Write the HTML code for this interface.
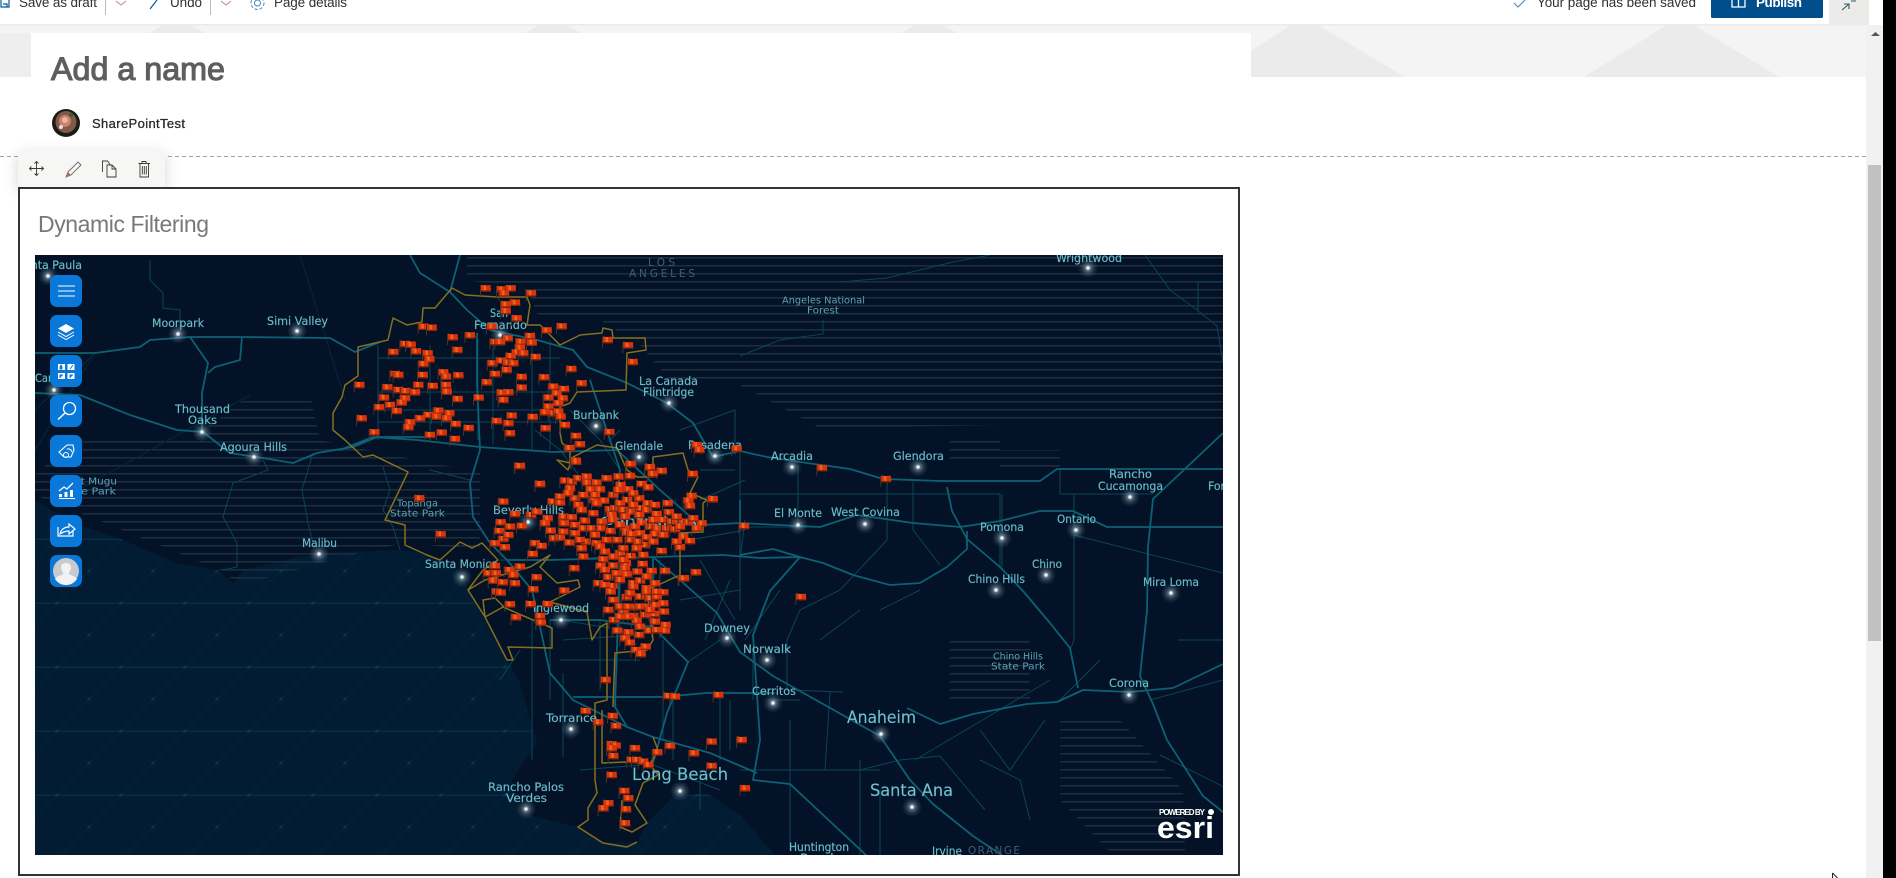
<!DOCTYPE html>
<html><head><meta charset="utf-8"><title>Add a name</title>
<style>
html,body{margin:0;padding:0;width:1896px;height:878px;overflow:hidden;background:#fff}
svg{display:block}
text{font-family:"Liberation Sans",sans-serif}
.l text{font-family:"DejaVu Sans","Liberation Sans",sans-serif;fill:#76c3d0;stroke:#4f98a8;stroke-width:.25;font-size:11.5px;dominant-baseline:central}
.b text{font-size:17px}
.s text{font-size:9.5px;fill:#5fa2b0;stroke:none}
.d text{fill:#3f6071;font-size:10.5px;stroke:none}
.r1{fill:none;stroke:#0d6175;stroke-width:1.8;stroke-linejoin:round}
.r2{fill:none;stroke:#0a4557;stroke-width:1}
.r3{fill:none;stroke:#06283a;stroke-width:1}
</style></head><body>
<svg width="1896" height="878" viewBox="0 0 1896 878" xmlns="http://www.w3.org/2000/svg">
<defs>
<pattern id="st" width="8" height="8" patternUnits="userSpaceOnUse" y="1"><rect width="8" height="1.6" fill="#1d2d3e"/></pattern>
<pattern id="oc" width="64" height="64" patternUnits="userSpaceOnUse" x="57" y="603">
<rect width="64" height="1.4" y="-.3" fill="#052c42"/><rect width="64" height="1" y="63.600" fill="#052c42"/>
<path d="M0 64L64 0" stroke="#052a40" stroke-width=".6" fill="none"/>
<rect x="-1.500" y="-1.500" width="3" height="3" fill="#0b3a4a"/><rect x="62.500" y="-1.500" width="3" height="3" fill="#0b3a4a"/><rect x="-1.500" y="62.500" width="3" height="3" fill="#0b3a4a"/><rect x="62.500" y="62.500" width="3" height="3" fill="#0b3a4a"/>
<rect x="30.500" y="30.500" width="3" height="3" fill="#0a3545"/></pattern>
<radialGradient id="gl"><stop offset="0" stop-color="#fff"/><stop offset=".13" stop-color="#e8f4f6" stop-opacity=".95"/><stop offset=".26" stop-color="#a4bbc6" stop-opacity=".55"/><stop offset=".6" stop-color="#7d96a5" stop-opacity=".25"/><stop offset="1" stop-color="#6f8fa0" stop-opacity="0"/></radialGradient>
<circle id="c" r="10" fill="url(#gl)"/>
<g id="f"><rect x="-17" y="-10" width="3" height="33" fill="#4a3226"/><path d="M-14-11L-3-9 15-10 16 9 0 10-14 8z" fill="#d9330e"/><path d="M-7-9L1-9 2 9-6 9z" fill="#f4601a"/><path d="M-14 6L16 6 16 10-14 10z" fill="#8e240a"/></g>
<clipPath id="mc"><rect x="35" y="255" width="1188" height="600"/></clipPath>
<filter id="sh" x="-20%" y="-50%" width="140%" height="220%"><feDropShadow dx="0" dy="4" stdDeviation="7" flood-color="#000" flood-opacity=".17"/></filter>
</defs>

<rect width="1896" height="878" fill="#fff"/>
<!-- hero -->
<rect x="0" y="25" width="1866" height="52" fill="#f4f4f4"/>
<rect x="0" y="24" width="1866" height="1.500" fill="#ebebeb"/>
<rect x="0" y="33" width="31" height="44" fill="#eeeeee"/>
<path d="M163 25h27l96 52h-210zM539 25h27l96 52h-210zM915 25h27l96 52h-210zM1291 25h27l87 52h-154v-26zM1667 25h27l85 52h-195z" fill="#ebebeb"/>
<rect x="31" y="33" width="1220" height="44" fill="#fff"/>
<!-- top bar -->
<rect width="1896" height="24" fill="#fff"/>
<path d="M1 0V7H9V0M3 4h4v3" fill="none" stroke="#005a9e" stroke-width="1.200"/>
<text x="19" y="7" font-size="13.500" fill="#323130" textLength="78">Save as draft</text>
<rect x="105" y="0" width="1" height="15" fill="#bbb"/>
<path d="M116 1l5 4 5-4" fill="none" stroke="#c0888a" stroke-width="1"/>
<path d="M150 9l7-9" fill="none" stroke="#005a9e" stroke-width="1.200"/>
<text x="170" y="7" font-size="13.500" fill="#323130" textLength="32">Undo</text>
<rect x="210" y="0" width="1" height="15" fill="#bbb"/>
<path d="M221 1l5 4 5-4" fill="none" stroke="#c0888a" stroke-width="1"/>
<circle cx="257.500" cy="3" r="3" fill="none" stroke="#4a86b8"/><circle cx="257.500" cy="3" r="6.500" fill="none" stroke="#4a86b8" stroke-dasharray="3 2"/>
<text x="274" y="7" font-size="13.500" fill="#323130" textLength="73">Page details</text>
<path d="M1514 3l4 4 8-8" fill="none" stroke="#4a86b8" stroke-width="1"/>
<text x="1537" y="7" font-size="13.500" fill="#323130" textLength="159">Your page has been saved</text>
<rect x="1711" y="-3" width="112" height="21" rx="1.500" fill="#004e8c"/>
<path d="M1732 0v7h6.500h6.500v-7M1738.500 0v7" fill="none" stroke="#fff" stroke-width="1.300"/>
<text x="1756" y="7" font-size="13.500" font-weight="700" fill="#fff" textLength="46">Publish</text>
<rect x="1829" y="0" width="40" height="25" fill="#edebe9"/>
<path d="M1842 10l7-6M1844 4h5v5M1851 1h5" fill="none" stroke="#2c5a68" stroke-width="1.100"/>
<!-- scrollbar -->
<rect x="1866" y="25" width="17" height="853" fill="#f1f1f1"/>
<path d="M1871 36l4.500-4 4.500 4z" fill="#4c5a62"/>
<rect x="1868" y="165" width="13" height="476" fill="#c1c1c1"/>
<rect x="1883" y="0" width="13" height="878" fill="#000"/>
<path d="M1832.500 873l0 5M1832.500 873l5 5" fill="none" stroke="#222" stroke-width="1"/>
<!-- title -->
<text x="51" y="80" font-size="32" fill="#605e5c" stroke="#605e5c" stroke-width="1.100" textLength="174" lengthAdjust="spacingAndGlyphs">Add a name</text>
<ellipse cx="66" cy="123" rx="14" ry="14" fill="#1b1c12"/><ellipse cx="66" cy="122" rx="10.500" ry="11" fill="#7f5a46"/><circle cx="65" cy="121" r="6" fill="#c9806c"/><circle cx="65" cy="120" r="3" fill="#eab39f"/><circle cx="61" cy="127" r="2" fill="#e7e0d8"/><circle cx="71" cy="115" r="2" fill="#3d5a3a"/>
<text x="92" y="128" font-size="13" fill="#2b2a29" stroke="#2b2a29" stroke-width=".3" textLength="93">SharePointTest</text>
<line x1="0" y1="156.500" x2="1866" y2="156.500" stroke="#a3a3a3" stroke-dasharray="4 3"/>
<rect x="18" y="150" width="147" height="38" rx="6" fill="#f6f6f5" filter="url(#sh)"/>
<!-- toolbar icons -->
<g fill="none" stroke="#3b3a39" stroke-width=".9">
<path d="M36.500 162v13M29.500 168.500h14M34.500 163.500l2-2 2 2M34.500 173.500l2 2 2-2M31.500 166.500l-2 2 2 2M41.500 166.500l2 2-2 2"/>
<path d="M66 177l2-5 10-10 3 3-10 10z" stroke="#6b6a69"/><path d="M66 177l2-5 3 3z" fill="#a5705e" stroke="none"/>
<path d="M116 177h-9v-12h5l4 4zM102.500 172v-11h5l3 4M112 165v4h4"/>
<path d="M138.500 163.500h11.500M142 163.500v-2h4v2M140 163.500v13.500h8.500v-13.500M142.300 166v8.500M144.300 166v8.500M146.300 166v8.500"/>
</g>
<!-- frame -->
<rect x="19" y="188" width="1220" height="687" fill="#fff" stroke="#333" stroke-width="2"/>
<text x="38" y="232" font-size="23" fill="#7a7876" textLength="171">Dynamic Filtering</text>

<!-- MAP -->
<g clip-path="url(#mc)">
<rect x="35" y="255" width="1188" height="600" fill="#031226"/>
<path d="M35 500L63 517 85 527 123 540 177 563 217 570 233 583 243 570 317 553 397 550 423 552 440 560 462 575 468 590 483 617 507 660 520 683 537 743 523 763 512 780 520 813 578 827 603 843 637 842 647 823 673 797 707 793 740 815 775 855H35z" fill="#021c33"/>
<path d="M35 500L63 517 85 527 123 540 177 563 217 570 233 583 243 570 317 553 397 550 423 552 440 560 462 575 468 590 483 617 507 660 520 683 537 743 523 763 512 780 520 813 578 827 603 843 637 842 647 823 673 797 707 793 740 815 775 855H35z" fill="url(#oc)"/>
<path d="M467 255H1223V425H1000L820 428 740 385 672 383 640 345 600 320 540 320 527 290 467 280zM73 440H190L250 395H310L320 440 440 465 480 470 480 550 407 543 370 550 240 585 220 570 110 525 35 495V475zM1060 720H1120L1183 790 1185 852H1110L1060 800zM950 640H1030V700H950zM1000 450H1060V470H1000zM950 440H1000V460H950z" fill="url(#st)"/>
<!-- thin roads -->
<path class="r3" d="M35 353H95L35 410M95 353L35 450M60 500L250 395M300 255L345 400"/>
<path class="r2" d="M150 260V280L163 293V308L180 310V333M263 460L268 470 233 483 228 500 223 517 237 543 237 567 223 570M313 453L302 490 308 523 313 543M383 467L390 490 383 510 393 527 400 550M378 345V440M430 345V440M478 340V440M493 340V445M532 345V450M550 340V450M378 358H560M378 392H560M378 410H560M378 422H560M740 451V523M798 465V527M887 482V540L840 590 800 610 787 640 787 690 843 692M913 482V530L940 565M1002 494V567M1060 469V494H1153M1074 494V640L1070 650M740 494H887L1000 494M1074 535L1223 573M740 527L820 527M740 520V610M1000 494V555L1000 567M740 356L780 340 823 334 823 320M840 282L887 278 953 262 990 255M1145 255L1170 290 1197 310 1217 326 1223 362M1223 282L1198 282 1198 310M830 692L825 770M860 760V856M768 700L800 700M790 720L790 850M880 790L880 856M915 760L1050 680M1100 660L1060 700M1178 640L1223 640M1150 700L1223 680M980 730L1010 770 1045 720M980 760L1020 780 1030 820M1230 790L1160 755M740 770L880 770M860 770L900 760 940 756 985 810M532 620V760M550 620V700M563 673V757M600 620V690M663 640V740M688 662L720 640M673 700V760M720 693V760M753 650V700M700 770L700 810M620 560V640M660 560V620M500 680L520 650M430 470L470 480M500 560L560 560 620 556M560 620L610 628M705 640L730 580M740 560L745 520M745 640L780 590M730 700V750M820 640L860 610M880 610L920 590M700 470L735 470M680 430L735 410 735 455M610 440L620 430M535 430L560 450 575 470 590 490M570 410L600 440 620 470M700 500L745 480M690 540L745 530M680 600L740 590M560 660H640M563 640L640 635M640 760L720 790M580 770L640 765M700 560L735 620"/>
<!-- main roads -->
<path class="r1" d="M35 353H95L140 347 150 340 190 337H240L330 338 355 352 380 342M35 393L80 395 130 415 177 430 203 432 230 453 263 458 293 463 317 453 353 447 377 437H430M190 337L208 363 202 393V430M242 337L240 360 215 367 208 373M410 255L420 273 450 292 467 310 490 330 537 340 573 350 587 367 627 383 667 403 693 423 707 447 713 457M460 255L450 292M477 333V383L480 450 470 483 473 517 490 543 507 560 532 590 550 673 573 700 627 727 653 737 710 753 757 773M340 450L373 437 417 440 480 447 553 452 617 450M507 560H550L653 557 723 555 760 558 800 557M713 457L740 451 767 457 807 463 850 469 883 479 940 481 1040 481 1057 469H1223M617 450L660 490 700 525 740 523 820 527 857 515 913 523 960 527 1000 521 1040 511H1073L1107 527H1223M740 555L773 549 800 557 823 563 853 575 890 585 920 583 947 567 967 549V531M947 487L952 511 967 539 1000 567 1023 591 1050 623 1070 648 1078 688M653 557L680 580 717 613 740 652 773 676 823 704 880 736 910 780 933 804 973 836 1003 856M907 708L940 724 973 714 1027 704 1057 702 1083 690 1130 692 1173 688 1223 664M1223 433L1187 467 1153 499 1148 547 1147 611 1140 676 1153 704 1167 740 1203 796 1223 812M800 557L770 591 753 635 760 740 753 780 790 784 867 856M620 557L617 647 615 707 627 727M653 557V627L688 662 667 713 653 763M550 620H600L653 627 688 662M573 697H660L707 693H745L775 693M590 380L610 440 620 470 617 500M740 500V530"/>
<!-- boundary -->
<path fill="none" stroke="#86701f" stroke-width="1.500" stroke-linejoin="round" d="M497 297L465 295 452 288 435 308H423L422 322 407 325 393 318 388 340 358 347V376L345 385 342 397 333 413V430L345 440 363 457 373 455 408 472 385 520 405 525V545L427 555 440 560 460 542 472 548 482 543 498 560 483 570 468 590 485 580 530 567 550 555 540 567 557 583 578 580 580 587 550 602 587 612 592 640 600 627 607 623V700L595 703V780L597 793 588 808V820L578 827 603 843 627 847 637 842M602 710V763L625 762 650 764 658 750 653 737M652 767L658 775 643 783 635 805 647 823 632 832 620 827 622 800M613 707L615 653 647 650 653 640 647 590 680 575V533L703 532V503M468 590L485 617 507 660 513 660 508 647 552 648V628L533 620 503 607 485 617 483 600 495 598 505 608M497 297L527 297 530 305 527 325 540 325 560 345 580 335 602 333 603 328 612 330 613 338 645 338 646 350 627 353 626 390 577 392 570 403 560 407 560 433 562 443 570 450V463L557 460 568 470 573 457 597 445 617 448 627 470 637 477 653 477V457L683 453 688 470 698 477 690 493 707 500 703 503"/>
<!-- lights -->
<use href="#c" x="48" y="276"/><use href="#c" x="54" y="390"/><use href="#c" x="178" y="334"/><use href="#c" x="297" y="331"/><use href="#c" x="202" y="432"/><use href="#c" x="254" y="457"/><use href="#c" x="319" y="554"/><use href="#c" x="500" y="335"/><use href="#c" x="669" y="403"/><use href="#c" x="596" y="426"/><use href="#c" x="639" y="457"/><use href="#c" x="715" y="456"/><use href="#c" x="528" y="522"/><use href="#c" x="462" y="577"/><use href="#c" x="561" y="620"/><use href="#c" x="571" y="729"/><use href="#c" x="727" y="638"/><use href="#c" x="680" y="791"/><use href="#c" x="526" y="809"/><use href="#c" x="1088" y="268"/><use href="#c" x="792" y="467"/><use href="#c" x="918" y="467"/><use href="#c" x="1130" y="497"/><use href="#c" x="798" y="525"/><use href="#c" x="865" y="524"/><use href="#c" x="1002" y="538"/><use href="#c" x="1076" y="530"/><use href="#c" x="1046" y="575"/><use href="#c" x="996" y="590"/><use href="#c" x="1171" y="593"/><use href="#c" x="767" y="660"/><use href="#c" x="773" y="703"/><use href="#c" x="1129" y="695"/><use href="#c" x="881" y="734"/><use href="#c" x="912" y="807"/>
<!-- labels -->
<g class="l">
<text x="17" y="265" textLength="65" lengthAdjust="spacingAndGlyphs">Santa Paula</text><text x="35" y="378" textLength="47" lengthAdjust="spacingAndGlyphs">Camarillo</text>
<text x="152" y="323" textLength="52" lengthAdjust="spacingAndGlyphs">Moorpark</text><text x="267" y="321" textLength="61" lengthAdjust="spacingAndGlyphs">Simi Valley</text>
<text x="175" y="409" textLength="55" lengthAdjust="spacingAndGlyphs">Thousand</text><text x="188" y="420" textLength="29" lengthAdjust="spacingAndGlyphs">Oaks</text>
<text x="220" y="447" textLength="67" lengthAdjust="spacingAndGlyphs">Agoura Hills</text><text x="302" y="543" textLength="35" lengthAdjust="spacingAndGlyphs">Malibu</text>
<text x="490" y="313" textLength="18" lengthAdjust="spacingAndGlyphs">San</text><text x="474" y="325" textLength="53" lengthAdjust="spacingAndGlyphs">Fernando</text>
<text x="639" y="381" textLength="59" lengthAdjust="spacingAndGlyphs">La Canada</text><text x="643" y="392" textLength="51" lengthAdjust="spacingAndGlyphs">Flintridge</text>
<text x="573" y="415" textLength="46" lengthAdjust="spacingAndGlyphs">Burbank</text><text x="615" y="446" textLength="48" lengthAdjust="spacingAndGlyphs">Glendale</text><text x="688" y="445" textLength="54" lengthAdjust="spacingAndGlyphs">Pasadena</text>
<text x="493" y="510" textLength="71" lengthAdjust="spacingAndGlyphs">Beverly Hills</text><text x="600" y="521" textLength="97" lengthAdjust="spacingAndGlyphs">Central LA</text><text x="425" y="564" textLength="73" lengthAdjust="spacingAndGlyphs">Santa Monica</text>
<text x="533" y="608" textLength="56" lengthAdjust="spacingAndGlyphs">Inglewood</text><text x="546" y="718" textLength="51" lengthAdjust="spacingAndGlyphs">Torrance</text><text x="704" y="628" textLength="46" lengthAdjust="spacingAndGlyphs">Downey</text><text x="743" y="649" textLength="48" lengthAdjust="spacingAndGlyphs">Norwalk</text>
<text x="488" y="787" textLength="76" lengthAdjust="spacingAndGlyphs">Rancho Palos</text><text x="506" y="798" textLength="41" lengthAdjust="spacingAndGlyphs">Verdes</text>
<text x="1056" y="258" textLength="66" lengthAdjust="spacingAndGlyphs">Wrightwood</text>
<text x="771" y="456" textLength="42" lengthAdjust="spacingAndGlyphs">Arcadia</text><text x="893" y="456" textLength="51" lengthAdjust="spacingAndGlyphs">Glendora</text><text x="1109" y="474" textLength="43" lengthAdjust="spacingAndGlyphs">Rancho</text><text x="1098" y="486" textLength="65" lengthAdjust="spacingAndGlyphs">Cucamonga</text><text x="1208" y="486" textLength="44" lengthAdjust="spacingAndGlyphs">Fontana</text>
<text x="774" y="513" textLength="48" lengthAdjust="spacingAndGlyphs">El Monte</text><text x="831" y="512" textLength="69" lengthAdjust="spacingAndGlyphs">West Covina</text><text x="980" y="527" textLength="44" lengthAdjust="spacingAndGlyphs">Pomona</text><text x="1057" y="519" textLength="39" lengthAdjust="spacingAndGlyphs">Ontario</text><text x="1032" y="564" textLength="30" lengthAdjust="spacingAndGlyphs">Chino</text><text x="968" y="579" textLength="57" lengthAdjust="spacingAndGlyphs">Chino Hills</text><text x="1143" y="582" textLength="56" lengthAdjust="spacingAndGlyphs">Mira Loma</text>
<text x="752" y="691" textLength="44" lengthAdjust="spacingAndGlyphs">Cerritos</text><text x="1109" y="683" textLength="40" lengthAdjust="spacingAndGlyphs">Corona</text>
<text x="789" y="847" textLength="60" lengthAdjust="spacingAndGlyphs">Huntington</text><text x="800" y="858" textLength="38" lengthAdjust="spacingAndGlyphs">Beach</text><text x="932" y="851" textLength="30" lengthAdjust="spacingAndGlyphs">Irvine</text>
</g>
<g class="l b"><text x="632" y="775" textLength="96" lengthAdjust="spacingAndGlyphs">Long Beach</text><text x="847" y="718" textLength="69" lengthAdjust="spacingAndGlyphs">Anaheim</text><text x="870" y="791" textLength="83" lengthAdjust="spacingAndGlyphs">Santa Ana</text></g>
<g class="l s"><text x="59" y="482" textLength="58" lengthAdjust="spacingAndGlyphs">Point Mugu</text><text x="58" y="492" textLength="58" lengthAdjust="spacingAndGlyphs">State Park</text><text x="397" y="504" textLength="41" lengthAdjust="spacingAndGlyphs">Topanga</text><text x="390" y="514" textLength="55" lengthAdjust="spacingAndGlyphs">State Park</text><text x="782" y="301" textLength="83" lengthAdjust="spacingAndGlyphs">Angeles National</text><text x="807" y="311" textLength="32" lengthAdjust="spacingAndGlyphs">Forest</text><text x="993" y="657" textLength="50" lengthAdjust="spacingAndGlyphs">Chino Hills</text><text x="991" y="667" textLength="54" lengthAdjust="spacingAndGlyphs">State Park</text></g>
<g class="l d"><text x="648" y="263" textLength="27">LOS</text><text x="629" y="274" textLength="66">ANGELES</text><text x="968" y="851" textLength="52">ORANGE</text></g>
<!-- flags: valley -->
<g transform="translate(340 250) scale(.3333)">
<use href="#f" x="437" y="115"/><use href="#f" x="485" y="118"/><use href="#f" x="512" y="115"/><use href="#f" x="492" y="130"/><use href="#f" x="573" y="130"/><use href="#f" x="525" y="158"/><use href="#f" x="497" y="163"/><use href="#f" x="497" y="183"/><use href="#f" x="530" y="205"/><use href="#f" x="250" y="230"/><use href="#f" x="275" y="233"/><use href="#f" x="455" y="230"/><use href="#f" x="620" y="241"/><use href="#f" x="665" y="229"/><use href="#f" x="338" y="262"/><use href="#f" x="390" y="256"/><use href="#f" x="803" y="270"/><use href="#f" x="864" y="286"/><use href="#f" x="878" y="336"/><use href="#f" x="570" y="258"/><use href="#f" x="503" y="265"/><use href="#f" x="465" y="276"/><use href="#f" x="480" y="276"/><use href="#f" x="542" y="275"/><use href="#f" x="575" y="278"/><use href="#f" x="540" y="293"/><use href="#f" x="530" y="308"/><use href="#f" x="550" y="310"/><use href="#f" x="512" y="318"/><use href="#f" x="587" y="321"/><use href="#f" x="195" y="282"/><use href="#f" x="212" y="284"/><use href="#f" x="228" y="304"/><use href="#f" x="160" y="306"/><use href="#f" x="352" y="300"/><use href="#f" x="263" y="310"/><use href="#f" x="268" y="328"/><use href="#f" x="250" y="342"/><use href="#f" x="457" y="340"/><use href="#f" x="483" y="332"/><use href="#f" x="503" y="338"/><use href="#f" x="520" y="340"/><use href="#f" x="500" y="360"/><use href="#f" x="694" y="357"/><use href="#f" x="165" y="372"/><use href="#f" x="175" y="375"/><use href="#f" x="248" y="375"/><use href="#f" x="355" y="376"/><use href="#f" x="310" y="367"/><use href="#f" x="318" y="380"/><use href="#f" x="318" y="405"/><use href="#f" x="320" y="425"/><use href="#f" x="235" y="405"/><use href="#f" x="278" y="408"/><use href="#f" x="142" y="412"/><use href="#f" x="175" y="420"/><use href="#f" x="197" y="423"/><use href="#f" x="225" y="427"/><use href="#f" x="195" y="445"/><use href="#f" x="185" y="458"/><use href="#f" x="132" y="443"/><use href="#f" x="150" y="465"/><use href="#f" x="117" y="472"/><use href="#f" x="170" y="483"/><use href="#f" x="58" y="405"/><use href="#f" x="353" y="447"/><use href="#f" x="416" y="443"/><use href="#f" x="465" y="372"/><use href="#f" x="545" y="381"/><use href="#f" x="612" y="382"/><use href="#f" x="440" y="397"/><use href="#f" x="545" y="413"/><use href="#f" x="725" y="400"/><use href="#f" x="640" y="410"/><use href="#f" x="672" y="417"/><use href="#f" x="650" y="430"/><use href="#f" x="505" y="427"/><use href="#f" x="485" y="428"/><use href="#f" x="490" y="450"/><use href="#f" x="625" y="443"/><use href="#f" x="668" y="445"/><use href="#f" x="655" y="460"/><use href="#f" x="625" y="470"/><use href="#f" x="640" y="490"/><use href="#f" x="655" y="485"/><use href="#f" x="615" y="487"/><use href="#f" x="295" y="482"/><use href="#f" x="328" y="490"/><use href="#f" x="265" y="495"/><use href="#f" x="240" y="505"/><use href="#f" x="210" y="517"/><use href="#f" x="205" y="532"/><use href="#f" x="290" y="500"/><use href="#f" x="320" y="505"/><use href="#f" x="347" y="522"/><use href="#f" x="386" y="534"/><use href="#f" x="270" y="555"/><use href="#f" x="305" y="548"/><use href="#f" x="345" y="567"/><use href="#f" x="65" y="505"/><use href="#f" x="103" y="547"/><use href="#f" x="515" y="497"/><use href="#f" x="470" y="513"/><use href="#f" x="505" y="520"/><use href="#f" x="578" y="501"/><use href="#f" x="662" y="500"/><use href="#f" x="675" y="525"/><use href="#f" x="617" y="535"/><use href="#f" x="708" y="558"/><use href="#f" x="510" y="550"/><use href="#f" x="720" y="583"/><use href="#f" x="688" y="594"/><use href="#f" x="808" y="546"/><use href="#f" x="707" y="632"/><use href="#f" x="540" y="648"/><use href="#f" x="873" y="643"/><use href="#f" x="930" y="651"/><use href="#f" x="965" y="663"/><use href="#f" x="938" y="672"/><use href="#f" x="1058" y="672"/><use href="#f" x="1070" y="585"/><use href="#f" x="1078" y="600"/><use href="#f" x="1190" y="596"/><use href="#f" x="238" y="745"/><use href="#f" x="302" y="853"/><use href="#f" x="600" y="702"/>
</g>
<!-- flags: central -->
<g transform="translate(480 460) scale(.3333)">
<use href="#f" x="118" y="18"/><use href="#f" x="180" y="72"/><use href="#f" x="288" y="5"/><use href="#f" x="452" y="12"/><use href="#f" x="510" y="22"/><use href="#f" x="545" y="33"/><use href="#f" x="518" y="42"/><use href="#f" x="638" y="42"/><use href="#f" x="450" y="48"/><use href="#f" x="255" y="62"/><use href="#f" x="275" y="65"/><use href="#f" x="295" y="55"/><use href="#f" x="320" y="50"/><use href="#f" x="322" y="68"/><use href="#f" x="350" y="68"/><use href="#f" x="380" y="55"/><use href="#f" x="415" y="50"/><use href="#f" x="270" y="85"/><use href="#f" x="332" y="88"/><use href="#f" x="360" y="88"/><use href="#f" x="422" y="75"/><use href="#f" x="445" y="88"/><use href="#f" x="485" y="72"/><use href="#f" x="505" y="82"/><use href="#f" x="698" y="118"/><use href="#f" x="635" y="108"/><use href="#f" x="625" y="122"/><use href="#f" x="630" y="138"/><use href="#f" x="285" y="115"/><use href="#f" x="310" y="105"/><use href="#f" x="400" y="105"/><use href="#f" x="372" y="122"/><use href="#f" x="442" y="120"/><use href="#f" x="478" y="115"/><use href="#f" x="503" y="130"/><use href="#f" x="563" y="130"/><use href="#f" x="70" y="125"/><use href="#f" x="218" y="125"/><use href="#f" x="240" y="128"/><use href="#f" x="295" y="135"/><use href="#f" x="305" y="150"/><use href="#f" x="390" y="148"/><use href="#f" x="405" y="145"/><use href="#f" x="430" y="150"/><use href="#f" x="452" y="155"/><use href="#f" x="482" y="145"/><use href="#f" x="500" y="150"/><use href="#f" x="567" y="157"/><use href="#f" x="105" y="162"/><use href="#f" x="153" y="165"/><use href="#f" x="203" y="175"/><use href="#f" x="250" y="170"/><use href="#f" x="275" y="172"/><use href="#f" x="315" y="182"/><use href="#f" x="395" y="165"/><use href="#f" x="398" y="180"/><use href="#f" x="435" y="170"/><use href="#f" x="478" y="165"/><use href="#f" x="530" y="162"/><use href="#f" x="548" y="180"/><use href="#f" x="485" y="188"/><use href="#f" x="510" y="200"/><use href="#f" x="62" y="187"/><use href="#f" x="90" y="200"/><use href="#f" x="125" y="198"/><use href="#f" x="195" y="190"/><use href="#f" x="212" y="212"/><use href="#f" x="252" y="190"/><use href="#f" x="285" y="195"/><use href="#f" x="310" y="205"/><use href="#f" x="335" y="205"/><use href="#f" x="362" y="205"/><use href="#f" x="392" y="213"/><use href="#f" x="435" y="205"/><use href="#f" x="465" y="200"/><use href="#f" x="532" y="205"/><use href="#f" x="560" y="205"/><use href="#f" x="585" y="208"/><use href="#f" x="610" y="185"/><use href="#f" x="625" y="188"/><use href="#f" x="665" y="190"/><use href="#f" x="640" y="175"/><use href="#f" x="58" y="213"/><use href="#f" x="285" y="220"/><use href="#f" x="440" y="218"/><use href="#f" x="480" y="220"/><use href="#f" x="525" y="222"/><use href="#f" x="550" y="225"/><use href="#f" x="610" y="230"/><use href="#f" x="630" y="243"/><use href="#f" x="70" y="237"/><use href="#f" x="222" y="235"/><use href="#f" x="240" y="233"/><use href="#f" x="268" y="248"/><use href="#f" x="318" y="245"/><use href="#f" x="350" y="250"/><use href="#f" x="380" y="240"/><use href="#f" x="412" y="240"/><use href="#f" x="450" y="240"/><use href="#f" x="495" y="255"/><use href="#f" x="475" y="245"/><use href="#f" x="165" y="250"/><use href="#f" x="185" y="258"/><use href="#f" x="75" y="262"/><use href="#f" x="305" y="265"/><use href="#f" x="360" y="260"/><use href="#f" x="375" y="275"/><use href="#f" x="452" y="288"/><use href="#f" x="490" y="285"/><use href="#f" x="600" y="262"/><use href="#f" x="545" y="273"/><use href="#f" x="158" y="282"/><use href="#f" x="310" y="290"/><use href="#f" x="370" y="298"/><use href="#f" x="438" y="310"/><use href="#f" x="488" y="312"/><use href="#f" x="283" y="325"/><use href="#f" x="120" y="320"/><use href="#f" x="45" y="318"/><use href="#f" x="88" y="330"/><use href="#f" x="362" y="318"/><use href="#f" x="400" y="317"/><use href="#f" x="435" y="325"/><use href="#f" x="472" y="335"/><use href="#f" x="515" y="333"/><use href="#f" x="555" y="333"/><use href="#f" x="648" y="337"/><use href="#f" x="25" y="340"/><use href="#f" x="48" y="340"/><use href="#f" x="170" y="352"/><use href="#f" x="440" y="343"/><use href="#f" x="385" y="352"/><use href="#f" x="612" y="355"/><use href="#f" x="40" y="362"/><use href="#f" x="68" y="367"/><use href="#f" x="105" y="370"/><use href="#f" x="355" y="370"/><use href="#f" x="460" y="370"/><use href="#f" x="480" y="362"/><use href="#f" x="525" y="370"/><use href="#f" x="398" y="378"/><use href="#f" x="160" y="388"/><use href="#f" x="253" y="392"/><use href="#f" x="50" y="395"/><use href="#f" x="62" y="398"/><use href="#f" x="392" y="395"/><use href="#f" x="460" y="380"/><use href="#f" x="550" y="397"/><use href="#f" x="400" y="420"/><use href="#f" x="440" y="412"/><use href="#f" x="480" y="410"/><use href="#f" x="510" y="415"/><use href="#f" x="90" y="433"/><use href="#f" x="152" y="432"/><use href="#f" x="203" y="432"/><use href="#f" x="550" y="430"/><use href="#f" x="462" y="442"/><use href="#f" x="497" y="440"/><use href="#f" x="525" y="435"/><use href="#f" x="385" y="450"/><use href="#f" x="430" y="453"/><use href="#f" x="552" y="455"/><use href="#f" x="108" y="472"/><use href="#f" x="180" y="468"/><use href="#f" x="402" y="480"/><use href="#f" x="460" y="468"/><use href="#f" x="522" y="462"/><use href="#f" x="495" y="465"/><use href="#f" x="470" y="482"/><use href="#f" x="525" y="485"/><use href="#f" x="557" y="495"/><use href="#f" x="183" y="488"/><use href="#f" x="412" y="512"/><use href="#f" x="445" y="517"/><use href="#f" x="478" y="525"/><use href="#f" x="507" y="512"/><use href="#f" x="555" y="512"/><use href="#f" x="435" y="535"/><use href="#f" x="450" y="548"/><use href="#f" x="497" y="560"/><use href="#f" x="468" y="570"/><use href="#f" x="482" y="582"/>
<use href="#f" x="340" y="120"/><use href="#f" x="420" y="130"/><use href="#f" x="460" y="135"/><use href="#f" x="520" y="180"/><use href="#f" x="420" y="195"/><use href="#f" x="455" y="222"/><use href="#f" x="500" y="232"/><use href="#f" x="575" y="185"/><use href="#f" x="340" y="160"/><use href="#f" x="365" y="185"/><use href="#f" x="420" y="280"/><use href="#f" x="430" y="300"/><use href="#f" x="410" y="340"/><use href="#f" x="500" y="385"/><use href="#f" x="530" y="410"/><use href="#f" x="450" y="400"/><use href="#f" x="420" y="440"/><use href="#f" x="445" y="470"/><use href="#f" x="480" y="440"/><use href="#f" x="510" y="450"/>
<use href="#f" x="265" y="100"/><use href="#f" x="345" y="105"/><use href="#f" x="350" y="130"/><use href="#f" x="415" y="90"/><use href="#f" x="460" y="100"/><use href="#f" x="525" y="135"/><use href="#f" x="590" y="170"/><use href="#f" x="600" y="200"/><use href="#f" x="650" y="205"/><use href="#f" x="590" y="245"/><use href="#f" x="520" y="245"/><use href="#f" x="430" y="265"/><use href="#f" x="345" y="225"/><use href="#f" x="300" y="240"/><use href="#f" x="250" y="215"/><use href="#f" x="470" y="265"/><use href="#f" x="400" y="290"/><use href="#f" x="420" y="360"/><use href="#f" x="375" y="330"/><use href="#f" x="500" y="350"/><use href="#f" x="420" y="470"/><use href="#f" x="480" y="500"/><use href="#f" x="530" y="510"/><use href="#f" x="445" y="440"/><use href="#f" x="500" y="395"/><use href="#f" x="375" y="375"/><use href="#f" x="530" y="395"/><use href="#f" x="240" y="110"/><use href="#f" x="170" y="155"/><use href="#f" x="85" y="225"/><use href="#f" x="45" y="250"/><use href="#f" x="100" y="345"/>
</g>
<!-- flags: south -->
<g transform="translate(440 480) scale(.3333)">
<use href="#f" x="497" y="600"/><use href="#f" x="685" y="648"/><use href="#f" x="705" y="650"/><use href="#f" x="835" y="645"/><use href="#f" x="437" y="693"/><use href="#f" x="475" y="727"/><use href="#f" x="518" y="708"/><use href="#f" x="528" y="738"/><use href="#f" x="515" y="793"/><use href="#f" x="527" y="797"/><use href="#f" x="515" y="805"/><use href="#f" x="520" y="828"/><use href="#f" x="585" y="805"/><use href="#f" x="690" y="798"/><use href="#f" x="652" y="817"/><use href="#f" x="575" y="840"/><use href="#f" x="590" y="840"/><use href="#f" x="610" y="845"/><use href="#f" x="625" y="855"/><use href="#f" x="762" y="820"/><use href="#f" x="815" y="785"/><use href="#f" x="905" y="780"/><use href="#f" x="815" y="858"/><use href="#f" x="515" y="885"/><use href="#f" x="915" y="925"/><use href="#f" x="553" y="933"/><use href="#f" x="565" y="955"/><use href="#f" x="505" y="970"/><use href="#f" x="490" y="985"/><use href="#f" x="558" y="988"/><use href="#f" x="555" y="1030"/><use href="#f" x="912" y="138"/><use href="#f" x="818" y="57"/><use href="#f" x="730" y="295"/>
</g>
<g transform="scale(.3333)"><use href="#f" x="2466" y="1404"/><use href="#f" x="2658" y="1437"/><use href="#f" x="2403" y="1791"/></g>
<!-- esri -->
<text x="1159" y="815" font-size="8" font-weight="700" fill="#fff" textLength="46">POWERED BY</text><circle cx="1211" cy="812" r="3" fill="#fff"/>
<text x="1157" y="838" font-size="31" font-weight="700" fill="#fff" textLength="57" lengthAdjust="spacingAndGlyphs">esri</text>
</g>
<!-- map buttons -->
<g fill="#0a78d8">
<rect x="50" y="275" width="32" height="32" rx="7"/><rect x="50" y="315" width="32" height="32" rx="7"/><rect x="50" y="355" width="32" height="32" rx="7"/><rect x="50" y="395" width="32" height="32" rx="7"/><rect x="50" y="435" width="32" height="32" rx="7"/><rect x="50" y="475" width="32" height="32" rx="7"/><rect x="50" y="515" width="32" height="32" rx="7"/><rect x="50" y="555" width="32" height="32" rx="7"/>
</g>
<path d="M58 286h17M58 291h17M58 296h17" stroke="#fff" fill="none"/>
<path d="M66 324l8 4.500-8 4.500-8-4.500z" fill="#fff"/><path d="M58 332l8 4.500 8-4.500M58 335l8 4.500 8-4.500" stroke="#fff" fill="none"/>
<path d="M58 364h7v6h-7zM67.500 364h7v6h-7zM58 373h7v6h-7zM67.500 373h7v6h-7z" fill="#fff"/><path d="M60 369v-2l1-2 1 2v2zM70 369l3-4M60 378v-3h3M70 378v-3h3" stroke="#0a78d8" fill="#0a78d8" stroke-width="1"/>
<circle cx="69.500" cy="408.500" r="6" fill="none" stroke="#fff" stroke-width="1.300"/><path d="M65 413l-7 6.500" stroke="#fff" stroke-width="1.500"/>
<path d="M59 452l8-7h6l1 5-3 7h-7z" fill="none" stroke="#fff" stroke-width="1.100"/><circle cx="66" cy="455" r="2.500" fill="none" stroke="#fff"/><path d="M67 449a4 4 0 0 1 5 3" fill="none" stroke="#fff"/>
<path d="M59 499h16v-1h-16zM59 497h3v-3h-3zM64.500 497h3v-5h-3zM70 497h3v-7h-3z" fill="#fff"/><path d="M59 491l5-4 3 2 6-6" fill="none" stroke="#fff" stroke-width="1.300"/>
<path d="M58 527v9h15v-5M60 534c1-5 5-7 9-7v-3l6 5-6 5v-3c-3 0-6 1-9 3z" fill="none" stroke="#fff" stroke-width="1.200"/>
<circle cx="66" cy="571" r="13" fill="#c9cacd"/><path d="M55 579c2-3 6-4 8-4.500v-2c-1-1-2-3-2-5 0-3 2-4.500 5-4.500s5 1.500 5 4.500c0 2-1 4-2 5v2c2 .5 6 1.500 8 4.500a13 13 0 0 1-22 0z" fill="#f2f2f2"/>
</svg>
</body></html>
